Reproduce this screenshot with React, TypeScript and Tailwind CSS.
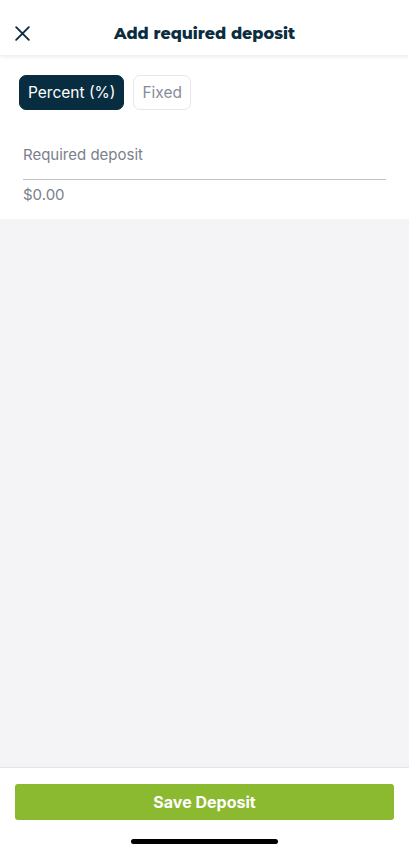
import { useState } from "react";

export default function App() {
  const [mode, setMode] = useState<"percent" | "fixed">("percent");

  return (
    <div className="flex h-[852px] w-full flex-col bg-[#f4f3f6] font-['Inter',sans-serif]">
      <header className="relative z-10 flex h-[55px] items-center bg-white shadow-[0_2px_4px_rgba(0,0,0,0.08)]">
        <button className="absolute left-[13px] top-[24px] text-[#0b2d3f]" aria-label="Close">
          <svg width="19" height="19" viewBox="0 0 24 24" fill="none" stroke="currentColor" strokeWidth="2.4" strokeLinecap="round">
            <path d="M4 4l16 16M20 4L4 20" />
          </svg>
        </button>
        <h1 className="mt-[12px] w-full text-center text-[16px] font-extrabold tracking-[0px] text-[#0b2d3f] font-['Montserrat','Inter',sans-serif]">
          Add required deposit
        </h1>
      </header>

      <section className="bg-white px-[19px] pb-[13px] pt-[20px]">
        <div className="flex gap-[9px]">
          <button
            onClick={() => setMode("percent")}
            className={
              mode === "percent"
                ? "h-[35px] rounded-[7px] border border-[#082d40] bg-[#082d40] px-[8px] text-[15.5px] text-white"
                : "h-[35px] rounded-[7px] border border-[#e6e6ea] bg-white px-[8px] text-[15.5px] text-[#858c98]"
            }
          >
            Percent (%)
          </button>
          <button
            onClick={() => setMode("fixed")}
            className={
              mode === "fixed"
                ? "h-[35px] rounded-[7px] border border-[#082d40] bg-[#082d40] px-[8px] text-[15.5px] text-white"
                : "h-[35px] rounded-[7px] border border-[#e6e6ea] bg-white px-[8px] text-[15.5px] text-[#858c98]"
            }
          >
            Fixed
          </button>
        </div>
        <div className="mx-[4px] mt-[34px]">
          <div className="text-[15px] text-[#7a818c]">Required deposit</div>
          <div className="mt-[12px] border-t border-[#c3c3c7]" />
          <div className="mt-[4px] text-[15px] text-[#7a818c]">$0.00</div>
        </div>
      </section>

      <div className="flex-1" />

      <footer className="border-t border-[#e4e3e8] bg-white px-[15px] pt-[16px] pb-[8px]">
        <button className="h-[36px] w-full rounded-[3px] bg-[#8bb92f] text-[16px] font-bold text-white font-['Liberation Sans',sans-serif]">
          Save Deposit
        </button>
        <div className="mt-[19px] flex justify-center">
          <div className="h-[5px] w-[147px] rounded-full bg-black" />
        </div>
      </footer>
    </div>
  );
}
